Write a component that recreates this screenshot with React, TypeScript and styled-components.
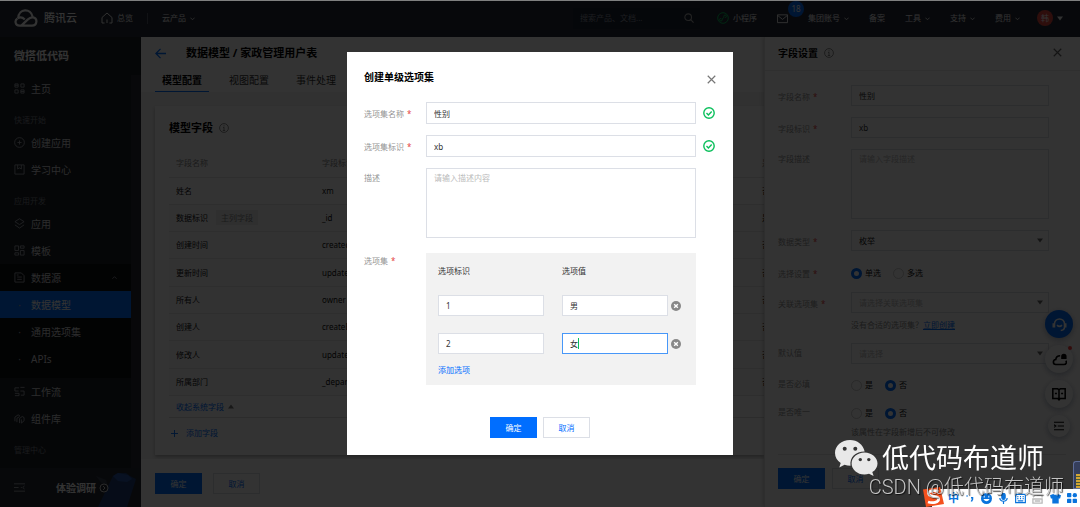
import React from "react";
import styled, { createGlobalStyle, css } from "styled-components";

const BLUE = "#006eff";

const GlobalStyle = createGlobalStyle`
  *, *::before, *::after { box-sizing: border-box; }
  body {
    margin: 0;
    background: #f2f2f2;
    color: #111;
    font-family: "Noto Sans", "Noto Sans CJK SC", sans-serif;
    font-size: 8px;
    line-height: 16px;
    overflow: hidden;
  }
  button, input, select, textarea { font: inherit; color: inherit; margin: 0; }
  button { padding: 0; border: 0; background: none; cursor: pointer; }
  a { color: ${BLUE}; text-decoration: none; }
  svg { display: block; flex: none; }
`;

/* ---------- page frame ---------- */

const Page = styled.div`
  height: 100vh;
  display: flex;
  flex-direction: column;
  overflow: hidden;
`;

const TopEdge = styled.div`
  position: relative;
  z-index: 1;
  flex: none;
  height: 1px;
  background: #7f8080;
`;

const Body = styled.div`
  flex: 1;
  min-height: 0;
  display: flex;
`;

/* ---------- top bar ---------- */

const TopBar = styled.header`
  flex: none;
  height: 36px;
  padding: 0 17px 2px 14px;
  display: flex;
  align-items: center;
  justify-content: space-between;
  background: #262c3a;
  color: #f4f4f4;
`;

const BarGroup = styled.div<{ $gap: number }>`
  display: flex;
  align-items: center;
  gap: ${(p) => p.$gap}px;
`;

const BarLink = styled.a`
  display: flex;
  align-items: center;
  gap: 4px;
  color: inherit;
`;

const Brand = styled.a`
  display: flex;
  align-items: center;
  gap: 6px;
  color: #fff;
  font-size: 11px;
  font-weight: 500;
`;

const BarDivider = styled.span`
  width: 1px;
  height: 11px;
  background: #555c6c;
`;

const Search = styled.label`
  width: 127px;
  height: 21px;
  padding: 0 6px 0 7px;
  display: flex;
  align-items: center;
  justify-content: space-between;
  background: #1a2433;
  color: #aaa;
  input {
    width: 80px;
    border: 0;
    padding: 0;
    outline: 0;
    background: none;
  }
  input::placeholder { color: #8d93a0; }
`;

const MailBox = styled.span`
  position: relative;
`;

const Badge = styled.span`
  position: absolute;
  left: 11px;
  top: -12px;
  width: 16px;
  height: 16px;
  border-radius: 8px;
  background: ${BLUE};
  color: #fff;
  text-align: center;
`;

const Avatar = styled.span`
  width: 16px;
  height: 16px;
  border-radius: 8px;
  background: #e5483f;
  color: #fff;
  text-align: center;
`;

/* ---------- side menu ---------- */

const Side = styled.aside`
  flex: none;
  width: 141px;
  display: flex;
  flex-direction: column;
  background: #1c2027;
  color: #fff;
`;

const SideTitle = styled.h1`
  flex: none;
  margin: 0;
  padding: 0 14px;
  line-height: 38px;
  font-size: 11px;
`;

const SideScroll = styled.nav`
  flex: 1;
  min-height: 0;
  overflow: hidden;
  padding-right: 10px;
  background: linear-gradient(to left, #282c34 10px, transparent 10px);
`;

const SideGroup = styled.h2`
  margin: 10px 0 1px;
  padding: 0 14px;
  font-size: 8px;
  font-weight: 400;
  line-height: 16px;
  color: #7c8088;
`;

const SideItem = styled.a<{ $active?: boolean }>`
  height: 27px;
  padding: 0 14px;
  display: flex;
  align-items: center;
  gap: 6px;
  font-size: 10px;
  color: ${(p) => (p.$active ? "#fff" : "#d5d7da")};
  background: ${(p) => (p.$active ? BLUE : "transparent")};
  > svg { color: #a0a4ab; }
  > svg:last-child { margin-left: auto; }
`;

const SubMenu = styled.div`
  background: #0d0f13;
  padding-bottom: 6px;
`;

const Bullet = styled.span`
  width: 11px;
  text-align: center;
  color: #aaa;
`;

const SideFoot = styled.div`
  flex: none;
  height: 39px;
  padding: 0 4px 0 14px;
  display: flex;
  align-items: center;
  background: #252a36;
  color: #a0a4ab;
`;

const Survey = styled.a`
  margin-left: 31px;
  display: flex;
  align-items: center;
  color: #fff;
  font-size: 10px;
  font-weight: 700;
`;

/* ---------- model editor ---------- */

const Main = styled.main`
  flex: 1;
  min-width: 0;
  display: flex;
  flex-direction: column;
  background: #f2f2f2;
`;

const MainHead = styled.div`
  flex: none;
  padding: 5px 14px 0;
  background: #fff;
`;

const Crumb = styled.div`
  height: 22px;
  display: flex;
  align-items: center;
  gap: 20px;
  color: ${BLUE};
  h2 {
    margin: 0;
    font-size: 11px;
    color: #000;
  }
`;

const Tabs = styled.div`
  display: flex;
  gap: 13px;
`;

const Tab = styled.button<{ $on?: boolean }>`
  height: 28px;
  padding: 4px 7px 0;
  font-size: 10px;
  font-weight: ${(p) => (p.$on ? 700 : 400)};
  color: ${(p) => (p.$on ? "#000" : "#333")};
  border-bottom: 1px solid ${(p) => (p.$on ? BLUE : "transparent")};
`;

const MainBody = styled.div`
  flex: 1;
  min-height: 0;
  padding: 14px 0 4px 14px;
`;

const Card = styled.section`
  height: 100%;
  padding: 14px 0 0 14px;
  background: #fff;
  box-shadow: 0 2px 3px rgba(0, 0, 0, 0.25);
`;

const Heading = styled.h3<{ $size: number }>`
  margin: 0;
  display: flex;
  align-items: center;
  gap: 6px;
  font-size: ${(p) => p.$size}px;
  line-height: 16px;
  color: #000;
  svg { color: #777; }
`;

const FieldTable = styled.table`
  width: 100%;
  height: 246px;
  margin-top: 14px;
  border-collapse: collapse;
  table-layout: fixed;
  th, td {
    height: 27px;
    padding: 0 0 0 7px;
    overflow: hidden;
    text-align: left;
    white-space: nowrap;
    font-weight: 400;
    border-bottom: 1px solid #e4e4e4;
  }
  th { color: #888; }
  tbody tr + tr { background: #fafafa; }
  col:first-child { width: 146px; }
  col:last-child { width: 9px; }
`;

const Tag = styled.span`
  margin-left: 8px;
  padding: 2px 5px;
  background: #e9e9e9;
  color: #888;
`;

const ToggleRow = styled.button`
  width: 100%;
  height: 22px;
  padding: 0 7px;
  display: flex;
  align-items: center;
  gap: 4px;
  color: ${BLUE};
  border-bottom: 1px solid #ddd;
  svg { color: #777; }
`;

const AddField = styled.button`
  margin: 7px 0 0 2px;
  display: flex;
  align-items: center;
  gap: 8px;
  color: ${BLUE};
`;

const MainFoot = styled.div`
  flex: none;
  padding: 14px 14px 13px;
  display: flex;
  gap: 11px;
  background: #fff;
`;

const Button = styled.button<{ $primary?: boolean }>`
  width: 47px;
  height: 21px;
  border: 1px solid ${(p) => (p.$primary ? BLUE : "#dcdfe6")};
  background: ${(p) => (p.$primary ? BLUE : "#fff")};
  color: ${(p) => (p.$primary ? "#fff" : BLUE)};
`;

/* ---------- shared form parts ---------- */

const FieldRow = styled.div<{ $gap?: number }>`
  display: flex;
  align-items: flex-start;
  margin-bottom: ${(p) => p.$gap ?? 11}px;
`;

const Label = styled.label<{ $width: number; $required?: boolean; $top?: number }>`
  flex: none;
  width: ${(p) => p.$width}px;
  padding-top: ${(p) => p.$top ?? 4}px;
  color: #949494;
  ${(p) =>
    p.$required &&
    css`
      &::after {
        content: "*";
        margin-left: 3px;
        color: #e54545;
      }
    `}
`;

const Control = styled.div`
  flex: 1;
  min-width: 0;
`;

const boxStyle = css`
  display: block;
  width: 100%;
  padding: 0 7px;
  border: 1px solid #dcdfe6;
  border-radius: 0;
  outline: 0;
  background: #fff;
  color: #333;
  &::placeholder { color: #bbb; opacity: 1; }
`;

const Input = styled.input<{ $height?: number; $focus?: boolean }>`
  ${boxStyle}
  height: ${(p) => p.$height ?? 21}px;
  ${(p) => p.$focus && css`border-color: #4797f8;`}
`;

const TextArea = styled.textarea`
  ${boxStyle}
  height: 70px;
  padding-top: 1px;
  resize: none;
`;

const SelectWrap = styled.div`
  position: relative;
  color: #666;
  svg { position: absolute; right: 6px; top: 8px; }
`;

const Select = styled.select<{ $empty?: boolean }>`
  ${boxStyle}
  height: 21px;
  appearance: none;
  color: ${(p) => (p.$empty ? "#bbb" : "#222")};
`;

const Radios = styled.div`
  height: 22px;
  display: flex;
  align-items: center;
  gap: 12px;
`;

const RadioLabel = styled.label`
  display: flex;
  align-items: center;
  gap: 3px;
`;

const RadioInput = styled.input`
  appearance: none;
  width: 11px;
  height: 11px;
  border: 1px solid #ccc;
  border-radius: 6px;
  &:checked { border: 3px solid ${BLUE}; }
`;

const Hint = styled.p<{ $top: number }>`
  margin: ${(p) => p.$top}px 0 0;
  color: #888;
  a { text-decoration: underline; }
`;

/* ---------- field settings drawer ---------- */

const Drawer = styled.aside`
  flex: none;
  position: relative;
  width: 316px;
  display: flex;
  flex-direction: column;
  background: #fff;
  border-left: 1px solid #e4e4e4;
  box-shadow: -1px 0 4px rgba(0, 0, 0, 0.2);
`;

const DrawerHead = styled.div`
  flex: none;
  height: 34px;
  padding: 0 18px 2px 13px;
  display: flex;
  align-items: center;
  justify-content: space-between;
  border-bottom: 1px solid #e8e8e8;
  color: #666;
`;

const DrawerBody = styled.form`
  flex: 1;
  min-height: 0;
  padding: 14px 31px 0 13px;
`;

const DrawerFoot = styled.div`
  flex: none;
  height: 53px;
  margin: 0 14px 0 13px;
  padding-top: 13px;
  display: flex;
  gap: 7px;
  border-top: 1px solid #e4e4e4;
`;

/* ---------- floating help buttons ---------- */

const Floats = styled.div`
  position: fixed;
  right: 7px;
  top: 310px;
  display: flex;
  flex-direction: column;
  align-items: center;
  gap: 7px;
`;

const FloatButton = styled.button<{ $primary?: boolean; $size?: number }>`
  position: relative;
  width: ${(p) => p.$size ?? 28}px;
  height: ${(p) => p.$size ?? 28}px;
  border-radius: 50%;
  display: grid;
  place-items: center;
  background: ${(p) => (p.$primary ? BLUE : "#fff")};
  color: ${(p) => (p.$primary ? "#fff" : "#000")};
  box-shadow: 0 2px 6px rgba(30, 50, 90, 0.35);
`;

const RedDot = styled.i`
  position: absolute;
  top: 1px;
  right: 1px;
  width: 4px;
  height: 4px;
  border-radius: 2px;
  background: #ff3b3b;
`;

/* ---------- dialog ---------- */

const Mask = styled.div`
  position: fixed;
  inset: 0;
  display: flex;
  align-items: center;
  justify-content: center;
  background: rgba(0, 0, 0, 0.8);
`;

const Dialog = styled.section`
  width: 386px;
  padding: 0 37px 17px 17px;
  background: #fff;
`;

const DialogHead = styled.div`
  height: 50px;
  margin-right: -20px;
  display: flex;
  align-items: center;
  justify-content: space-between;
  h2 {
    margin: 0;
    font-size: 10px;
    color: #000;
  }
  button { color: #777; padding-top: 4px; }
`;

const Status = styled.span`
  width: 20px;
  margin-right: -20px;
  padding: 5px 0 0 7px;
  color: #0abf5b;
`;

const OptionsPanel = styled.div`
  padding: 10px 12px 7px;
  background: #f2f2f2;
  color: #333;
`;

const OptionRow = styled.div<{ $bottom: number }>`
  display: grid;
  grid-template-columns: 1fr 18px 1fr 16px;
  align-items: center;
  margin-bottom: ${(p) => p.$bottom}px;
  > :nth-child(2) { grid-column: 3; }
  > button {
    grid-column: 4;
    justify-self: center;
    color: #888;
  }
`;

const CaretBox = styled.div`
  position: relative;
`;

const Caret = styled.i`
  position: absolute;
  left: 16px;
  top: 5px;
  width: 1px;
  height: 11px;
  background: #0abf5b;
`;

const DialogFoot = styled.div`
  margin: 32px -20px 0 0;
  display: flex;
  justify-content: center;
  gap: 6px;
`;

/* ---------- screen overlays ---------- */

const ImeBar = styled.div`
  position: fixed;
  right: 0;
  bottom: 0;
  width: 148px;
  height: 18px;
  padding: 0 3px 0 16px;
  display: flex;
  align-items: center;
  justify-content: space-between;
  background: #fff;
  color: #0a73dc;
  font-size: 11px;
  font-weight: 700;
`;

const ImeLogo = styled.svg`
  position: absolute;
  left: -10px;
  top: -2px;
`;

const Meter = styled.div`
  position: fixed;
  right: 0;
  bottom: 18px;
  width: 7px;
  height: 28px;
  padding: 12px 0 0 2px;
  border: 1px solid #5d6c98;
  border-right: 0;
  border-radius: 3px 0 0 0;
  background: #353e5c;
  i {
    display: block;
    width: 4px;
    height: 14px;
    background: repeating-linear-gradient(#d3a634 0 2px, #4e5a38 2px 3px);
  }
`;

const Watermark = styled.div`
  position: fixed;
  right: 36px;
  bottom: 30px;
  display: flex;
  align-items: center;
  gap: 4px;
  color: #fff;
  font-size: 27px;
  line-height: 38px;
`;

const Credit = styled.div`
  position: fixed;
  right: 16px;
  bottom: 10px;
  color: #c4c4c4;
  font-family: Roboto, "Noto Sans CJK SC", sans-serif;
  font-size: 20px;
  font-weight: 300;
  line-height: 20px;
  text-shadow: 1px 1px 1px rgba(0, 0, 0, 0.7);
`;

/* ---------- icons ---------- */

type IconProps = { size?: number; w?: number; children: React.ReactNode };

const Icon = ({ size = 11, w = 1, children }: IconProps) => (
  <svg width={size} height={size} viewBox="0 0 12 12" fill="none" stroke="currentColor" strokeWidth={w} aria-hidden="true">
    {children}
  </svg>
);

const Chevron = ({ up }: { up?: boolean }) => (
  <Icon size={5} w={2}><path d={up ? "M1 9l5-5 5 5" : "M1 4l5 5 5-5"} /></Icon>
);
const Triangle = ({ up }: { up?: boolean }) => (
  <svg width="6" height="5" viewBox="0 0 6 5" aria-hidden="true">
    <path d={up ? "M0 4.500L3 .5l3 4z" : "M0 .5h6L3 4.500z"} fill="currentColor" />
  </svg>
);
const InfoIcon = () => (
  <Icon size={10}><circle cx="6" cy="6" r="5.300" /><path d="M6 5v4.200M6 2.800v1.200M4.800 5.300H6M4.600 9h2.800" /></Icon>
);
const CloseIcon = ({ size = 9 }: { size?: number }) => (
  <Icon size={size} w={1.6}><path d="M1 1l10 10M11 1L1 11" /></Icon>
);
const CheckIcon = () => (
  <Icon size={12} w={1.4}><circle cx="6" cy="6" r="5.200" /><path d="M3.500 6l1.900 1.900 3.300-3.500" /></Icon>
);
const RemoveIcon = () => (
  <svg width="10" height="10" viewBox="0 0 12 12" aria-hidden="true">
    <circle cx="6" cy="6" r="6" fill="currentColor" />
    <path d="M3.800 3.800l4.400 4.400M8.200 3.800L3.800 8.200" stroke="#fff" strokeWidth="1.700" />
  </svg>
);
const CloudLogo = () => (
  <svg width="24" height="18" viewBox="0 0 24 18" fill="none" stroke="currentColor" strokeWidth="2.200" aria-hidden="true">
    <path d="M3.500 9.500C.5 11 .8 16.500 5.500 16.600H18c5.500-.2 6-7.800.6-8.300-2.300-.2-3.600 1-5 2.300l-6 5.800" />
    <path d="M4.300 9C4.500-.7 17-1.200 18.700 8" />
    <path d="M3.800 9.300c2.300-1.500 4.800-1 7 1.200" />
  </svg>
);

const sideIcons: Record<string, React.ReactNode> = {
  home: <Icon><path d="M1 1h3.500v3.500H1zM7.500 1H11v3.500H7.500zM1 7.500h3.500V11H1zM7.500 7.500H11V11H7.500z" /><path d="M1 2.500h3.500M7.500 9.300H11" /></Icon>,
  plus: <Icon><circle cx="6" cy="6" r="5.300" /><path d="M6 3.800v4.400M3.800 6h4.400" /></Icon>,
  book: <Icon><path d="M1 1h10v10H1zM4 1v4.500l2-1.300 2 1.300V1" /></Icon>,
  layers: <Icon><path d="M6 .8L11 4 6 7.200 1 4zM1 7.500l5 3.500 5-3.500" /></Icon>,
  grid: <Icon><path d="M1 1h4v5H1zM7 1h4v2.500H7zM1 8.500h4V11H1zM7 6h4v5H7z" /></Icon>,
  data: <Icon><path d="M1 1h7l3 3v7H1zM3.500 5.500h5M3.500 8h5M3 3.300h2" /></Icon>,
  flow: <Icon><path d="M5.500 2H1v3.500h4M7 1.500h4.500M7 5.500h4V10H7.500M1 8h4.500M1 10.500h4.500V8" /></Icon>,
  lib: <Icon><path d="M1 9V4.500L4.500 2l2 1.300M3.200 10V5.700L6 4M6 11V6l3-2.200L11 5v3.500L8 11V7" /></Icon>,
};

/* ---------- pieces ---------- */

const DropLink = ({ text }: { text: string }) => (
  <BarLink href="#">{text}<Chevron /></BarLink>
);

const Radio = ({ name, text, checked }: { name: string; text: string; checked?: boolean }) => (
  <RadioLabel><RadioInput type="radio" name={name} defaultChecked={checked} />{text}</RadioLabel>
);

const SelectBox = ({ id, text, empty }: { id: string; text: string; empty?: boolean }) => (
  <SelectWrap>
    <Select id={id} $empty={empty}><option>{text}</option></Select>
    <Triangle />
  </SelectWrap>
);

const rows = [
  ["姓名", "xm", "否"],
  ["数据标识", "_id", "是"],
  ["创建时间", "createdAt", "否"],
  ["更新时间", "updatedAt", "否"],
  ["所有人", "owner", "否"],
  ["创建人", "createBy", "否"],
  ["修改人", "updateBy", "否"],
  ["所属部门", "_departmentList", "否"],
];

const Header = () => (
  <TopBar>
    <BarGroup $gap={14}>
      <BarGroup $gap={24}>
        <Brand href="#"><CloudLogo />腾讯云</Brand>
        <BarLink href="#">
          <Icon size={12}><path d="M1 5.500L6 1l5 4.500V11H8.500M1 5.500V11h2.500M6 7.500V11" /></Icon>总览
        </BarLink>
      </BarGroup>
      <BarDivider />
      <DropLink text="云产品" />
    </BarGroup>
    <BarGroup $gap={17}>
      <Search>
        <input placeholder="搜索产品、文档..." aria-label="搜索" />
        <Icon size={10} w={1.3}><circle cx="5" cy="5" r="4" /><path d="M8 8l3.500 3.500" /></Icon>
      </Search>
      <BarGroup $gap={20}>
        <BarLink href="#">
          <svg width="12" height="12" viewBox="0 0 12 12" fill="none" stroke="#0abf5b" aria-hidden="true">
            <circle cx="6" cy="6" r="5.300" />
            <path d="M6.800 5.600V4.300a1.300 1.300 0 1 1 1.400 1.300M5.200 6.400v1.300a1.300 1.300 0 1 1-1.400-1.300M6.800 5.500L5.200 7" />
          </svg>
          小程序
        </BarLink>
        <MailBox>
          <Icon><path d="M.5 2h11v8.500H.5zM.5 2.500L6 7l5.500-4.500" /></Icon>
          <Badge>18</Badge>
        </MailBox>
        <DropLink text="集团账号" />
        <BarLink href="#">备案</BarLink>
        <DropLink text="工具" />
        <DropLink text="支持" />
        <DropLink text="费用" />
      </BarGroup>
      <BarGroup $gap={4}><Avatar>韩</Avatar><Triangle /></BarGroup>
    </BarGroup>
  </TopBar>
);

const Sidebar = () => (
  <Side>
    <SideTitle>微搭低代码</SideTitle>
    <SideScroll>
      <SideItem href="#">{sideIcons.home}<span>主页</span></SideItem>
      <SideGroup>快速开始</SideGroup>
      <SideItem href="#">{sideIcons.plus}<span>创建应用</span></SideItem>
      <SideItem href="#">{sideIcons.book}<span>学习中心</span></SideItem>
      <SideGroup>应用开发</SideGroup>
      <SideItem href="#">{sideIcons.layers}<span>应用</span></SideItem>
      <SideItem href="#">{sideIcons.grid}<span>模板</span></SideItem>
      <SubMenu>
        <SideItem href="#">{sideIcons.data}<span>数据源</span><Chevron up /></SideItem>
        <SideItem href="#" $active><Bullet>·</Bullet><span>数据模型</span></SideItem>
        <SideItem href="#"><Bullet>·</Bullet><span>通用选项集</span></SideItem>
        <SideItem href="#"><Bullet>·</Bullet><span>APIs</span></SideItem>
      </SubMenu>
      <SideItem href="#">{sideIcons.flow}<span>工作流</span></SideItem>
      <SideItem href="#">{sideIcons.lib}<span>组件库</span></SideItem>
      <SideGroup>管理中心</SideGroup>
    </SideScroll>
    <SideFoot>
      <Icon><path d="M0 2h12M0 6h5M7.500 6h1M0 10h12M11.500 4.300L9.500 6l2 1.700" /></Icon>
      <Survey href="#">
        体验调研
        <svg width="40" height="39" viewBox="0 0 40 39" aria-hidden="true">
          <path d="M0 8l14 18-4-14z" fill="#3a4150" />
          <path d="M17 8l3-2 2-1h8l4 3 6 3-9 28H2z" fill="#1f3f78" />
          <path d="M17 8l5 5 9 1 5-3-4-4-10-2z" fill="#2a58a8" />
          <circle cx="8" cy="20" r="4" fill="#252a36" stroke="#ccc" />
          <path d="M7 18l2 2-2 2" fill="none" stroke="#ccc" />
        </svg>
      </Survey>
    </SideFoot>
  </Side>
);

const Editor = () => (
  <Main>
    <MainHead>
      <Crumb>
        <Icon w={1.4}><path d="M12 6H1M6 1L1 6l5 5" /></Icon>
        <h2>数据模型 / 家政管理用户表</h2>
      </Crumb>
      <Tabs>
        <Tab $on>模型配置</Tab>
        <Tab>视图配置</Tab>
        <Tab>事件处理</Tab>
      </Tabs>
    </MainHead>
    <MainBody>
      <Card>
        <Heading $size={11}>模型字段<InfoIcon /></Heading>
        <FieldTable>
          <colgroup><col /><col /><col /></colgroup>
          <thead><tr><th>字段名称</th><th>字段标识</th><th>是</th></tr></thead>
          <tbody>
            {rows.map(([name, key, unique], i) => (
              <tr key={key}>
                <td>{name}{i === 1 && <Tag>主列字段</Tag>}</td>
                <td>{key}</td>
                <td>{unique}</td>
              </tr>
            ))}
          </tbody>
        </FieldTable>
        <ToggleRow>收起系统字段<Triangle up /></ToggleRow>
        <AddField><Icon size={7} w={1.6}><path d="M6 0v12M0 6h12" /></Icon>添加字段</AddField>
      </Card>
    </MainBody>
    <MainFoot><Button $primary>确定</Button><Button>取消</Button></MainFoot>
  </Main>
);

const FieldSettings = () => (
  <Drawer>
    <DrawerHead>
      <Heading $size={10}>字段设置<InfoIcon /></Heading>
      <button aria-label="关闭字段设置"><CloseIcon /></button>
    </DrawerHead>
    <DrawerBody>
      <FieldRow>
        <Label $width={73} $required htmlFor="f-name">字段名称</Label>
        <Control><Input id="f-name" defaultValue="性别" /></Control>
      </FieldRow>
      <FieldRow>
        <Label $width={73} $required htmlFor="f-key">字段标识</Label>
        <Control><Input id="f-key" defaultValue="xb" /></Control>
      </FieldRow>
      <FieldRow>
        <Label $width={73} $top={2} htmlFor="f-desc">字段描述</Label>
        <Control><TextArea id="f-desc" placeholder="请输入字段描述" /></Control>
      </FieldRow>
      <FieldRow>
        <Label $width={73} $required htmlFor="f-type">数据类型</Label>
        <Control><SelectBox id="f-type" text="枚举" /></Control>
      </FieldRow>
      <FieldRow $gap={8}>
        <Label as="span" $width={73} $required>选择设置</Label>
        <Radios><Radio name="mode" text="单选" checked /><Radio name="mode" text="多选" /></Radios>
      </FieldRow>
      <FieldRow $gap={10}>
        <Label $width={73} $required htmlFor="f-set">关联选项集</Label>
        <Control>
          <SelectBox id="f-set" text="请选择关联选项集" empty />
          <Hint $top={4}>没有合适的选项集？<a href="#">立即创建</a></Hint>
        </Control>
      </FieldRow>
      <FieldRow $gap={10}>
        <Label $width={73} $top={2} htmlFor="f-default">默认值</Label>
        <Control><SelectBox id="f-default" text="请选择" empty /></Control>
      </FieldRow>
      <FieldRow $gap={6}>
        <Label as="span" $width={73} $top={2}>是否必填</Label>
        <Radios><Radio name="must" text="是" /><Radio name="must" text="否" checked /></Radios>
      </FieldRow>
      <FieldRow>
        <Label as="span" $width={73} $top={2}>是否唯一</Label>
        <Control>
          <Radios><Radio name="unique" text="是" /><Radio name="unique" text="否" checked /></Radios>
          <Hint $top={0}>该属性在字段新增后不可修改</Hint>
        </Control>
      </FieldRow>
    </DrawerBody>
    <DrawerFoot><Button $primary>确定</Button><Button>取消</Button></DrawerFoot>
  </Drawer>
);

const HelpButtons = () => (
  <Floats>
    <FloatButton $primary aria-label="客服">
      <Icon size={15} w={1.2}><path d="M2 8V5.500a4 4 0 0 1 8 0V8q0 2.500-3 2.800M1 5.500v2.300h1V5.500zM11 5.500v2.300h-1V5.500zM4 6.500q2 2 4 0" /></Icon>
    </FloatButton>
    <FloatButton aria-label="消息">
      <Icon size={15} w={1.3}><path d="M6.500 3C4 3 3.200 4.500 3 6 .5 6.200.5 10 3 10h6.500C11.500 10 12 8 11 7" /><path d="M8 5V3.500a1.500 1.500 0 0 1 3 0V5z" fill="currentColor" /></Icon>
      <RedDot />
    </FloatButton>
    <FloatButton aria-label="文档">
      <Icon size={14} w={1.3}><path d="M.7 1.500h4.100L6 2.500l1.200-1h4.100v8.300H7L6 11l-1-1.200H.7zM6 2.500v8M2.500 5.500h1.700M7.800 5.500h1.700" /></Icon>
    </FloatButton>
    <FloatButton $size={22} aria-label="菜单">
      <Icon size={10} w={1.3}><path d="M0 1.500h12M4.500 6H12M0 10.500h12M0 4.500L2.200 6 0 7.500" /></Icon>
    </FloatButton>
  </Floats>
);

const OptionSetDialog = () => (
  <Mask>
    <Dialog role="dialog" aria-labelledby="dlg-title">
      <DialogHead>
        <h2 id="dlg-title">创建单级选项集</h2>
        <button aria-label="关闭"><CloseIcon /></button>
      </DialogHead>
      <FieldRow>
        <Label $width={62} $required htmlFor="s-name">选项集名称</Label>
        <Control><Input id="s-name" $height={22} defaultValue="性别" /></Control>
        <Status><CheckIcon /></Status>
      </FieldRow>
      <FieldRow>
        <Label $width={62} $required htmlFor="s-key">选项集标识</Label>
        <Control><Input id="s-key" $height={22} defaultValue="xb" /></Control>
        <Status><CheckIcon /></Status>
      </FieldRow>
      <FieldRow $gap={15}>
        <Label $width={62} $top={2} htmlFor="s-desc">描述</Label>
        <Control><TextArea id="s-desc" placeholder="请输入描述内容" /></Control>
      </FieldRow>
      <FieldRow $gap={0}>
        <Label as="span" $width={62} $required $top={0}>选项集</Label>
        <Control>
          <OptionsPanel>
            <OptionRow $bottom={16}><span>选项标识</span><span>选项值</span></OptionRow>
            <OptionRow $bottom={17}>
              <Input aria-label="选项标识 1" defaultValue="1" />
              <Input aria-label="选项值 1" defaultValue="男" />
              <button type="button" aria-label="删除选项 1"><RemoveIcon /></button>
            </OptionRow>
            <OptionRow $bottom={8}>
              <Input aria-label="选项标识 2" defaultValue="2" />
              <CaretBox><Input aria-label="选项值 2" $focus defaultValue="女" /><Caret /></CaretBox>
              <button type="button" aria-label="删除选项 2"><RemoveIcon /></button>
            </OptionRow>
            <a href="#">添加选项</a>
          </OptionsPanel>
        </Control>
      </FieldRow>
      <DialogFoot><Button $primary>确定</Button><Button>取消</Button></DialogFoot>
    </Dialog>
  </Mask>
);

const ScreenOverlays = () => (
  <>
    <Meter><i /></Meter>
    <ImeBar>
      <ImeLogo width="22" height="20" viewBox="0 0 22 20" aria-hidden="true">
        <path d="M1 2.500L18 0l4 17-18 3z" fill="#f4511e" />
        <path d="M16.500 4.500C11 2.500 5 4.500 7 7.500s9 1 9.500 4.500-6 4.500-10.500 3" fill="none" stroke="#fff" strokeWidth="2.800" />
      </ImeLogo>
      <span>中</span>
      <Icon size={9} w={2}><path d="M2 2.500h1.500M8 5h2v2l-1.500 3" /></Icon>
      <svg width="11" height="11" viewBox="0 0 12 12" aria-hidden="true"><circle cx="6" cy="6" r="6" fill="currentColor" /><path d="M3.500 3v2M8.500 3v2" stroke="#fff" /><path d="M2.500 6.500h7q-3.500 5-7 0z" fill="#fff" /></svg>
      <Icon size={11} w={1.3}><rect x="4.200" y="0.500" width="3.600" height="6.500" rx="1.800" fill="currentColor" /><path d="M2 5.500q.3 3.500 4 3.500t4-3.500M6 9v3" /></Icon>
      <Icon size={11} w={1.3}><path d="M.7 1.500h10.600v9H.7zM2.500 4h1.200M5.400 4h1.200M8.300 4h1.200M2.500 6.200h1.200M5.400 6.200h1.200M8.300 6.200h1.200M3 8.500h6" /></Icon>
      <svg width="11" height="11" viewBox="0 0 12 12" fill="none" stroke="#bbb" strokeWidth="1.500" aria-hidden="true"><path d="M1 6.500h10v4.500H1zM5 2h6v3M3 8.700h6M1 4.500L4 2" /></svg>
      <svg width="11" height="11" viewBox="0 0 12 12" aria-hidden="true"><path d="M0 2.500L3.500 1q2.500 2 5 0L12 2.500 11 6H9.500v5.500h-7V6H1z" fill="currentColor" /></svg>
      <svg width="10" height="10" viewBox="0 0 12 12" aria-hidden="true"><g fill="currentColor"><rect width="5.200" height="5.200" rx="1" /><rect x="6.800" width="5.200" height="5.200" rx="2.600" /><rect y="6.800" width="5.200" height="5.200" rx="1" /><rect x="6.800" y="6.800" width="5.200" height="5.200" rx="1" /></g></svg>
    </ImeBar>
    <Watermark>
      <svg width="43" height="36" viewBox="0 0 43 36" aria-hidden="true">
        <path d="M15 0C6.500 0 0 5.800 0 13c0 4.200 2.200 7.700 5.700 10L4.300 27.500l5.200-2.700c2 .6 3.800.9 6 .9C14.500 17 21 11.500 29.700 11.600 28 4.500 22.500 0 15 0z" fill="#e8e8e8" />
        <path d="M29.500 12.500C22.200 12.500 16.600 17.500 16.600 23.500s5.600 11 12.900 11c1.600 0 3.100-.2 4.500-.7l4.600 2.200-1.300-3.900c3.400-2 5.200-5.200 5.200-8.600 0-6-5.700-11-13-11z" fill="#e8e8e8" />
        <g fill="#333"><circle cx="9.700" cy="8.800" r="2" /><circle cx="20.300" cy="8.800" r="2" /><circle cx="25.300" cy="19.600" r="1.700" /><circle cx="33.800" cy="19.600" r="1.700" /></g>
      </svg>
      低代码布道师
    </Watermark>
    <Credit>CSDN @低代码布道师</Credit>
  </>
);

export default function App() {
  return (
    <>
      <GlobalStyle />
      <Page>
        <TopEdge />
        <Header />
        <Body>
          <Sidebar />
          <Editor />
          <FieldSettings />
        </Body>
        <HelpButtons />
        <OptionSetDialog />
        <ScreenOverlays />
      </Page>
    </>
  );
}
